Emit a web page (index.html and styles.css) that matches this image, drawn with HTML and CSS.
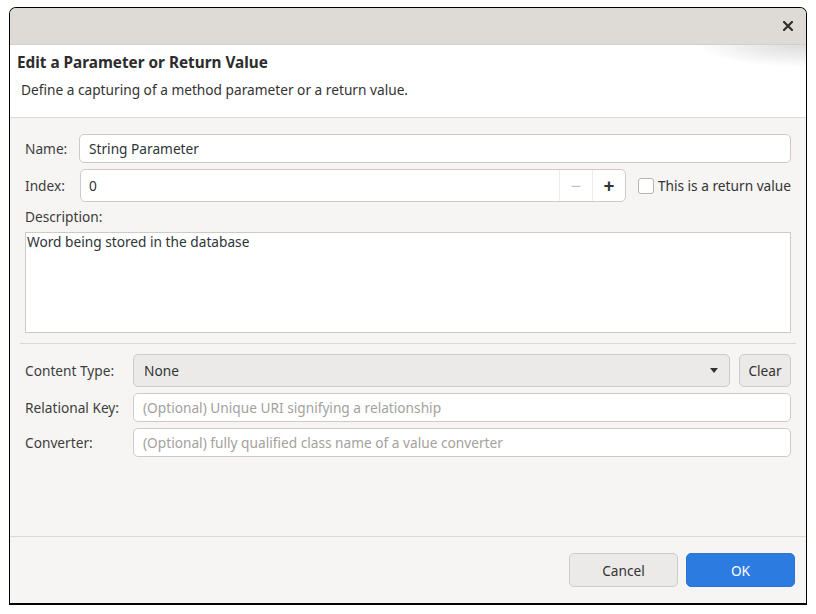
FILE: index.html
```html
<!DOCTYPE html>
<html>
<head>
<meta charset="utf-8">
<link rel="stylesheet" href="styles.css">
</head>
<body>
<div class="window">
  <div class="titlebar">
    <svg class="close" width="10" height="10" viewBox="0 0 10 10"><path d="M1 1L9 9M9 1L1 9" stroke="#2e2e2e" stroke-width="2.2" stroke-linecap="square"/></svg>
  </div>
  <div class="header">
    <div class="title">Edit a Parameter or Return Value</div>
    <div class="subtitle">Define a capturing of a method parameter or a return value.</div>
  </div>
  <div class="content">
    <div class="row row-name">
      <label class="lbl lbl-short">Name:</label>
      <div class="input grow">String Parameter</div>
    </div>
    <div class="row row-index">
      <label class="lbl lbl-short">Index:</label>
      <div class="spin grow">
        <div class="spin-value">0</div>
        <div class="spin-btn disabled">−</div>
        <div class="spin-btn">+</div>
      </div>
      <div class="check">
        <span class="box"></span>
        <span>This is a return value</span>
      </div>
    </div>
    <div class="desc-label">Description:</div>
    <div class="textarea">Word being stored in the database</div>
    <div class="sep"></div>
    <div class="row row-combo">
      <label class="lbl lbl-long">Content Type:</label>
      <div class="combo grow">
        <span>None</span>
        <span class="arrow"></span>
      </div>
      <div class="btn btn-clear">Clear</div>
    </div>
    <div class="row row-field">
      <label class="lbl lbl-long">Relational Key:</label>
      <div class="input grow placeholder">(Optional) Unique URI signifying a relationship</div>
    </div>
    <div class="row row-field">
      <label class="lbl lbl-long">Converter:</label>
      <div class="input grow placeholder">(Optional) fully qualified class name of a value converter</div>
    </div>
  </div>
  <div class="footer">
    <div class="btn btn-cancel">Cancel</div>
    <div class="btn btn-ok">OK</div>
  </div>
</div>
</body>
</html>
```

FILE: styles.css
```css
* { box-sizing: border-box; }
html, body { margin: 0; padding: 0; background: #ffffff; }
body {
  font-family: "Noto Sans", "DejaVu Sans", sans-serif;
  font-size: 13.7px;
  color: #3c3c3c;
}
.window {
  width: 798px;
  height: 598px;
  margin: 7px 0 0 9px;
  border: 1px solid #000;
  border-bottom-width: 2px;
  border-radius: 7px 7px 0 0;
  background: #f6f5f4;
  display: flex;
  flex-direction: column;
  overflow: hidden;
}
.titlebar {
  height: 37px;
  flex: none;
  background: #dedad6;
  display: flex;
  align-items: center;
  justify-content: flex-end;
  padding-right: 13px;
  border-bottom: 1px solid #d3cfcb;
}
.close { display: block; }
.header {
  height: 73px;
  flex: none;
  background: radial-gradient(ellipse 110px 22px at 100% 0%, #dcdcdc 0%, #ececec 50%, rgba(255,255,255,0) 100%), #ffffff;
  border-bottom: 1px solid #dcd8d4;
  padding: 6px 0 0 7px;
}
.title {
  font-weight: bold;
  font-size: 15.3px;
  color: #2c2c2c;
  line-height: 22px;
}
.subtitle {
  margin-top: 7px;
  margin-left: 4px;
  line-height: 20px;
  color: #333;
}
.content {
  flex: 1;
  padding: 16px 15px 0 15px;
  display: flex;
  flex-direction: column;
}
.row {
  display: flex;
  align-items: center;
}
.grow { flex: 1; }
.lbl { flex: none; color: #3d3d3d; }
.lbl-short { width: 54px; }
.lbl-long { width: 108px; }
.row-name { height: 29px; }
.row-index { height: 33px; margin-top: 6px; }
.input {
  height: 29px;
  background: #fff;
  border: 1px solid #cfcac5;
  border-radius: 5px;
  padding: 0 9px;
  display: flex;
  align-items: center;
  color: #2e3436;
  white-space: nowrap;
}
.placeholder { color: #a4a19d; }
.spin {
  height: 33px;
  background: #fff;
  border: 1px solid #cfcac5;
  border-radius: 5px;
  display: flex;
  margin-left: 1px;
}
.spin-value {
  flex: 1;
  display: flex;
  align-items: center;
  padding-left: 8px;
  color: #2e3436;
}
.spin-btn {
  width: 33px;
  display: flex;
  align-items: center;
  justify-content: center;
  border-left: 1px solid #eeeceb;
  font-size: 19px;
  font-weight: bold;
  color: #2e3436;
}
.spin-btn.disabled { color: #c9c6c2; font-weight: normal; }
.check {
  display: flex;
  align-items: center;
  margin-left: 12px;
  color: #333;
}
.box {
  width: 16px;
  height: 16px;
  border: 1px solid #b9b4ae;
  border-radius: 3px;
  background: #fff;
  margin-right: 4px;
}
.desc-label {
  margin-top: 6px;
  height: 18px;
  line-height: 18px;
}
.textarea {
  margin-top: 6px;
  height: 101px;
  background: #fff;
  border: 1px solid #cfcac5;
  padding: 0 1px;
  color: #2e3436;
  line-height: 18px;
}
.sep {
  height: 1px;
  background: #dcd8d4;
  margin: 10px -5px 10px -5px;
}
.row-combo { height: 33px; }
.combo {
  height: 33px;
  background: #eceae8;
  border: 1px solid #cfcac5;
  border-radius: 5px;
  display: flex;
  align-items: center;
  justify-content: space-between;
  padding: 0 11px 0 10px;
  color: #2e3436;
}
.arrow {
  width: 0;
  height: 0;
  border-left: 4px solid transparent;
  border-right: 4px solid transparent;
  border-top: 5px solid #2e3436;
}
.btn {
  display: flex;
  align-items: center;
  justify-content: center;
  border: 1px solid #cfcac5;
  border-radius: 5px;
  background: #eceae8;
  color: #333;
}
.btn-clear {
  width: 52px;
  height: 33px;
  margin-left: 9px;
}
.row-field { height: 29px; margin-top: 6px; }
.footer {
  height: 67px;
  flex: none;
  border-top: 1px solid #dcd8d4;
  display: flex;
  justify-content: flex-end;
  align-items: flex-start;
  padding: 16px 11px 0 0;
  gap: 8px;
}
.btn-cancel { width: 109px; height: 34px; }
.btn-ok {
  width: 109px;
  height: 34px;
  background: #2c7be0;
  border-color: #2a74d4;
  color: #fff;
}
```
